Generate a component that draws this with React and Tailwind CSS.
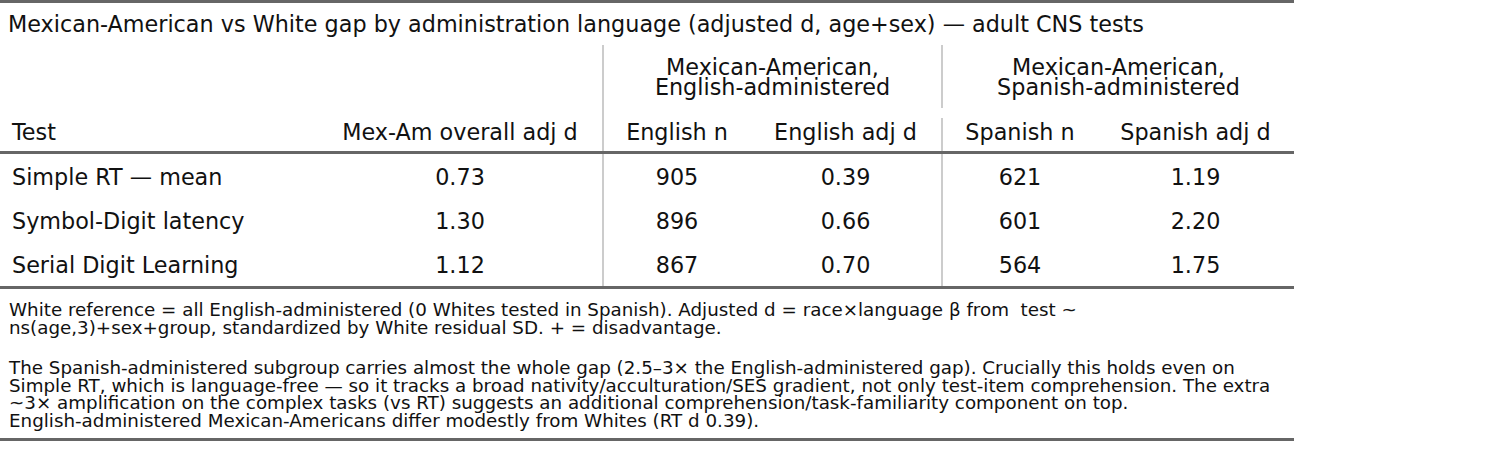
import React from "react";

const cols = "grid grid-cols-[318px_284px_148px_191px_156px_197px]";

const rows = [
  ["Simple RT — mean", "0.73", "905", "0.39", "621", "1.19"],
  ["Symbol-Digit latency", "1.30", "896", "0.66", "601", "2.20"],
  ["Serial Digit Learning", "1.12", "867", "0.70", "564", "1.75"],
];

export default function App() {
  return (
    <div className="w-[1500px] h-[470px] bg-white text-[#111] font-['DejaVu_Sans',sans-serif]">
      <div className="w-[1294px] border-t-[3px] border-b-[3px] border-[#666]">
        <div className="h-[42px] pl-[8px] flex items-center text-[22.3px] leading-none">
          Mexican-American vs White gap by administration language (adjusted d, age+sex) — adult CNS tests
        </div>

        {/* group header row */}
        <div className={`${cols} h-[63px] text-[22.3px] leading-[20px]`}>
          <div className="col-span-2" />
          <div className="col-span-2 border-l-2 border-[#cccccc] pt-[12px] text-center">
            <div>Mexican-American,</div>
            <div>English-administered</div>
          </div>
          <div className="col-span-2 border-l-2 border-[#cccccc] pt-[12px] text-center">
            <div>Mexican-American,</div>
            <div>Spanish-administered</div>
          </div>
        </div>

        {/* sub header row */}
        <div className={`${cols} h-[43px] text-[22.3px] leading-[26px]`}>
          <div className="pl-[12px] pt-[11px]">Test</div>
          <div className="pt-[11px] text-center">Mex-Am overall adj d</div>
          <div className="border-l-2 border-[#cccccc] pt-[11px] text-center">English n</div>
          <div className="pt-[11px] text-center">English adj d</div>
          <div className="pt-[10px]">
            <div className="h-[33px] border-l-2 border-[#cccccc] pt-[1px] text-center">Spanish n</div>
          </div>
          <div className="pt-[11px] text-center">Spanish adj d</div>
        </div>

        {/* body */}
        <div className="border-t-[3px] border-b-[3px] border-[#666]">
          {rows.map((r, i) => (
            <div key={i} className={`${cols} h-[44px] text-[22.3px] leading-none`}>
              <div className="flex items-center pl-[12px] pt-[3px]">{r[0]}</div>
              <div className="flex items-center justify-center pt-[3px]">{r[1]}</div>
              <div className="flex items-center justify-center pt-[3px] border-l-2 border-[#cccccc]">{r[2]}</div>
              <div className="flex items-center justify-center pt-[3px]">{r[3]}</div>
              <div className="flex items-center justify-center pt-[3px] border-l-2 border-[#cccccc]">{r[4]}</div>
              <div className="flex items-center justify-center pt-[3px]">{r[5]}</div>
            </div>
          ))}
        </div>

        {/* notes */}
        <div className="pl-[9px] pt-[12px] pb-[9px] text-[18.3px] leading-[17.5px] whitespace-pre">
          <div>
            <div>White reference = all English-administered (0 Whites tested in Spanish). Adjusted d = race×language β from  test ~</div>
            <div>ns(age,3)+sex+group, standardized by White residual SD. + = disadvantage.</div>
          </div>
          <div className="mt-[23px]">
            <div>The Spanish-administered subgroup carries almost the whole gap (2.5–3× the English-administered gap). Crucially this holds even on</div>
            <div>Simple RT, which is language-free — so it tracks a broad nativity/acculturation/SES gradient, not only test-item comprehension. The extra</div>
            <div>~3× amplification on the complex tasks (vs RT) suggests an additional comprehension/task-familiarity component on top.</div>
            <div>English-administered Mexican-Americans differ modestly from Whites (RT d 0.39).</div>
          </div>
        </div>
      </div>
    </div>
  );
}
